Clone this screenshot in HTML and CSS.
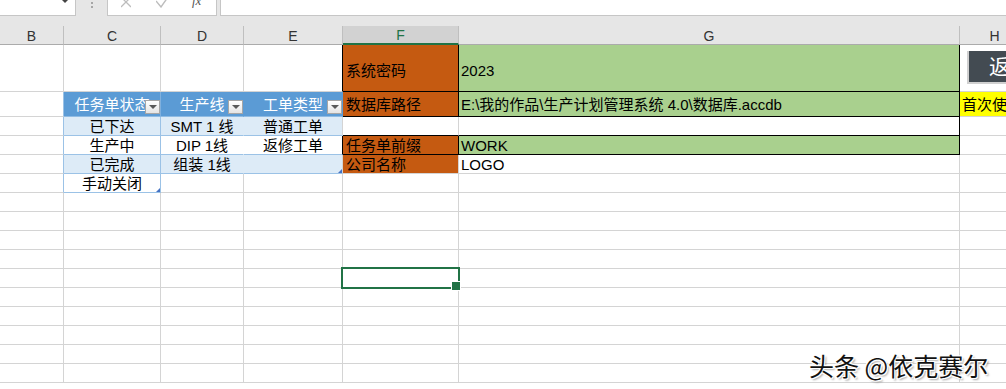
FILE: index.html
```html
<!DOCTYPE html>
<html lang="zh-CN">
<head>
  <meta charset="UTF-8">
  <title>系统设置</title>
  <link rel="stylesheet" href="styles.css">
</head>
<body>

<!--编辑栏-->
<div class="top">
  <div class="fbar">
    <div class="namebox"><i></i></div>
    <div class="dots"><b></b><b></b></div>
    <div class="btns">
      <svg class="ico" width="10" height="8" viewBox="0 0 10 8"><path d="M0 -3 L10 7 M10 -3 L0 7" stroke="#bdbdbd" stroke-width="1.3" fill="none"/></svg>
      <svg class="ico ok" width="12" height="8" viewBox="0 0 12 8"><path d="M0 1 L5 7 L12 -3" stroke="#bdbdbd" stroke-width="1.4" fill="none"/></svg>
      <span class="fx">fx</span>
    </div>
    <div class="input"></div>
  </div>
</div>

<!--表格-->
<div class="sheet">
  <div class="row head">
    <div class="c h">B</div>
    <div class="c h">C</div>
    <div class="c h">D</div>
    <div class="c h">E</div>
    <div class="c h on">F</div>
    <div class="c h">G</div>
    <div class="c h">H</div>
  </div>

  <div class="row r1">
    <div class="c"></div>
    <div class="c"></div>
    <div class="c"></div>
    <div class="c kr"></div>
    <div class="c or kr kb lift">系统密码</div>
    <div class="c gr kr kb lift">2023</div>
    <div class="c"><div class="btn">返回主页</div></div>
  </div>

  <div class="row r2">
    <div class="c tl"></div>
    <div class="c th tc">任务单状态<span class="dd"></span></div>
    <div class="c th">生产线<span class="dd"></span></div>
    <div class="c th kr">工单类型<span class="dd"></span></div>
    <div class="c or kr kb">数据库路径</div>
    <div class="c gr kr kb">E:\我的作品\生产计划管理系统 4.0\数据库.accdb</div>
    <div class="c ye">首次使用请设置</div>
  </div>

  <div class="row">
    <div class="c tl"></div>
    <div class="c tb tc band">已下达</div>
    <div class="c tb nr band">SMT 1 线</div>
    <div class="c tb band">普通工单</div>
    <div class="c kb"></div>
    <div class="c kb kr"></div>
    <div class="c"></div>
  </div>

  <div class="row">
    <div class="c tl"></div>
    <div class="c tb tc">生产中</div>
    <div class="c tb nr">DIP 1线</div>
    <div class="c tb kr">返修工单</div>
    <div class="c or kr kb">任务单前缀</div>
    <div class="c gr kr kb">WORK</div>
    <div class="c"></div>
  </div>

  <div class="row">
    <div class="c tl"></div>
    <div class="c tb tc band">已完成</div>
    <div class="c tb nr band">组装 1线</div>
    <div class="c tb band corner"></div>
    <div class="c or">公司名称</div>
    <div class="c txt">LOGO</div>
    <div class="c"></div>
  </div>

  <div class="row">
    <div class="c tl"></div>
    <div class="c tb tc corner">手动关闭</div>
    <div class="c"></div>
    <div class="c"></div>
    <div class="c"></div>
    <div class="c"></div>
    <div class="c"></div>
  </div>

  <div class="row"><div class="c"></div><div class="c"></div><div class="c"></div><div class="c"></div><div class="c"></div><div class="c"></div><div class="c"></div></div>
  <div class="row"><div class="c"></div><div class="c"></div><div class="c"></div><div class="c"></div><div class="c"></div><div class="c"></div><div class="c"></div></div>
  <div class="row"><div class="c"></div><div class="c"></div><div class="c"></div><div class="c"></div><div class="c"></div><div class="c"></div><div class="c"></div></div>
  <div class="row"><div class="c"></div><div class="c"></div><div class="c"></div><div class="c"></div><div class="c"></div><div class="c"></div><div class="c"></div></div>
  <!--选中的单元格-->
  <div class="row"><div class="c"></div><div class="c"></div><div class="c"></div><div class="c"></div><div class="c sel"></div><div class="c"></div><div class="c"></div></div>
  <div class="row"><div class="c"></div><div class="c"></div><div class="c"></div><div class="c"></div><div class="c"></div><div class="c"></div><div class="c"></div></div>
  <div class="row"><div class="c"></div><div class="c"></div><div class="c"></div><div class="c"></div><div class="c"></div><div class="c"></div><div class="c"></div></div>
  <div class="row"><div class="c"></div><div class="c"></div><div class="c"></div><div class="c"></div><div class="c"></div><div class="c"></div><div class="c"></div></div>
  <div class="row"><div class="c"></div><div class="c"></div><div class="c"></div><div class="c"></div><div class="c"></div><div class="c"></div><div class="c"></div></div>
  <div class="row"><div class="c"></div><div class="c"></div><div class="c"></div><div class="c"></div><div class="c"></div><div class="c"></div><div class="c"></div></div>
</div>

<!--水印-->
<div class="mark">头条 @依克赛尔</div>

</body>
</html>
```

FILE: styles.css
```css
* {
  margin: 0;
  padding: 0;
  box-sizing: border-box;
}

body {
  width: 1006px;
  height: 389px;
  overflow: hidden;
  position: relative;
  background-color: #fff;
  font-family: "Liberation Sans", "Noto Sans CJK SC", sans-serif;
}

/*编辑栏*/
.top {
  height: 26px;
  background-color: #e6e6e6;
}

.fbar {
  display: flex;
  height: 16px;
}

.namebox {
  width: 76px;
  background-color: #fff;
  border-right: 1px solid #c6c6c6;
  border-bottom: 1px solid #c6c6c6;
  display: flex;
  justify-content: flex-end;
  padding-right: 7px;
}

.namebox i {
  width: 0;
  height: 0;
  border-left: 3px solid transparent;
  border-right: 3px solid transparent;
  border-top: 3px solid #444;
}

.dots {
  width: 31px;
  display: flex;
  flex-direction: column;
  align-items: center;
  gap: 2px;
  padding-top: 2px;
}

.dots b {
  width: 2px;
  height: 2px;
  background-color: #a6a6a6;
}

.btns {
  width: 110px;
  background-color: #fff;
  border: 1px solid #c6c6c6;
  border-top: 0;
  display: flex;
  align-items: flex-start;
  padding-left: 13px;
  gap: 25px;
}

.ico {
  display: block;
}

.ok {
  margin-right: -1px;
}

.fx {
  font-family: "Liberation Serif", serif;
  font-style: italic;
  font-size: 13px;
  line-height: 13px;
  margin-top: -6px;
  color: #555;
}

.input {
  flex: 1;
  margin-left: 3px;
  background-color: #fff;
  border-left: 1px solid #c6c6c6;
  border-bottom: 1px solid #c6c6c6;
}

/*单元格*/
.row {
  display: grid;
  grid-template-columns: 64px 97px 83px 99px 116px 501px 70px;
  height: 19px;
}

.row.r1 {
  height: 47px;
}

.row.r2 {
  height: 25px;
}

.c {
  position: relative;
  display: flex;
  align-items: center;
  padding-top: 1px;
  border-right: 1px solid #d4d4d4;
  border-bottom: 1px solid #d4d4d4;
  font-size: 15px;
  line-height: 1;
  color: #000;
  white-space: nowrap;
}

/*列标题*/
.h {
  justify-content: center;
  background-color: #e6e6e6;
  font-size: 14px;
  color: #333;
  border-right-color: #bfbfbf;
  border-bottom-color: #ababab;
}

.h.on {
  background-color: #d2d2d2;
  color: #217346;
  border-bottom: 2px solid #217346;
}

.lift {
  padding-top: 4px;
}

.or {
  background-color: #c55a11;
  padding-left: 3px;
}

.gr {
  background-color: #a9d08e;
  padding-left: 2px;
}

.txt {
  padding-left: 2px;
}

.kr {
  border-right-color: #000;
}

.kb {
  border-bottom-color: #000;
}

.ye {
  background-color: #ffff00;
  padding-left: 2px;
}

/*按钮形状*/
.btn {
  position: absolute;
  left: 7px;
  top: 6px;
  width: 90px;
  height: 33px;
  background-color: #434b52;
  border-left: 2px solid #d0d0d0;
  border-bottom: 2px solid #d0d0d0;
  color: #fff;
  font-size: 21px;
  padding-left: 20px;
  display: flex;
  align-items: center;
}

/*表格样式*/
.th {
  justify-content: center;
  background-color: #5b9bd5;
  color: #fff;
  border-right-color: #5b9bd5;
  border-bottom-color: #8fbbe3;
}

.th.tc {
  border-right-color: #7fb0de;
}

.tl {
  border-right-color: #9bc2e6;
}

.tb {
  justify-content: center;
  border-bottom-color: #9bc2e6;
}

.tc {
  border-right-color: #9bc2e6;
}

.band {
  background-color: #ddebf7;
}

.nr {
  border-right-color: #fff;
}

.nr.band {
  border-right-color: #ddebf7;
}

.dd {
  position: absolute;
  right: 0;
  bottom: 2px;
  width: 15px;
  height: 14px;
  background: linear-gradient(#fff, #e4e4e4);
  border: 1px solid #a6a6a6;
  display: flex;
  align-items: center;
  justify-content: center;
}

.dd::after {
  content: "";
  width: 0;
  height: 0;
  border-left: 4px solid transparent;
  border-right: 4px solid transparent;
  border-top: 4px solid #595959;
}

.corner::after {
  content: "";
  position: absolute;
  right: 0;
  bottom: 0;
  border-left: 4px solid transparent;
  border-bottom: 4px solid #4472c4;
}

/*选中框*/
.sel {
  z-index: 1;
}

.sel::after {
  content: "";
  position: absolute;
  top: -2px;
  left: -2px;
  right: -2px;
  bottom: -2px;
  border: 2px solid #217346;
}

.sel::before {
  content: "";
  position: absolute;
  right: -3px;
  bottom: -4px;
  width: 8px;
  height: 8px;
  background-color: #217346;
  border: 1px solid #fff;
  z-index: 1;
}

/*水印*/
.mark {
  position: absolute;
  left: 809px;
  top: 349px;
  font-family: "Noto Sans CJK SC", sans-serif;
  font-size: 25px;
  line-height: 32px;
  color: #111;
  text-shadow: 1px 1px 0 #fff, -1px -1px 0 #fff, 1px -1px 0 #fff, -1px 1px 0 #fff, 2px 2px 2px rgba(0, 0, 0, .35);
}
```
